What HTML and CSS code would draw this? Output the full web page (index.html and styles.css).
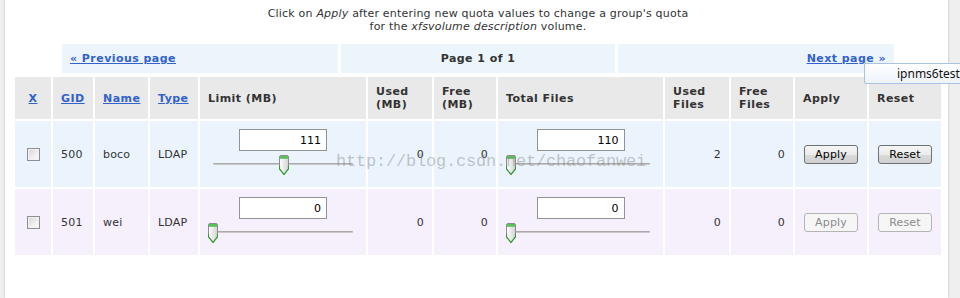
FILE: index.html
```html
<!DOCTYPE html>
<html lang="en">
<head>
  <meta charset="UTF-8" />
  <title>Group Quotas</title>
  <link rel="stylesheet" href="styles.css">
</head>
<body>

<div class="panel">
  <div class="content">
    <p class="intro">Click on <em>Apply</em> after entering new quota values to change a group's quota<br>for the <em>xfsvolume description</em> volume.</p>

    <table class="pager">
      <tr>
        <td class="pager-prev"><a href="#">&laquo; Previous page</a></td>
        <td class="pager-page">Page 1 of 1</td>
        <td class="pager-next"><a href="#">Next page &raquo;</a></td>
      </tr>
    </table>

    <table class="quotas">
      <thead>
        <tr>
          <th class="c-x"><a href="#">X</a></th>
          <th class="c-gid"><a href="#">GID</a></th>
          <th class="c-name"><a href="#">Name</a></th>
          <th class="c-type"><a href="#">Type</a></th>
          <th class="c-limit">Limit (MB)</th>
          <th class="c-used">Used<br>(MB)</th>
          <th class="c-free">Free<br>(MB)</th>
          <th class="c-files">Total Files</th>
          <th class="c-usedf">Used<br>Files</th>
          <th class="c-freef">Free<br>Files</th>
          <th class="c-apply">Apply</th>
          <th class="c-reset">Reset</th>
        </tr>
      </thead>
      <tbody>
        <tr class="row-a">
          <td class="check"><input type="checkbox"></td>
          <td>500</td>
          <td>boco</td>
          <td>LDAP</td>
          <td class="slide-cell">
            <input class="quota-input" type="text" value="111">
            <div class="slider">
              <div class="slider-track"></div>
              <div class="slider-thumb" style="left:71px">
                <svg width="10" height="20" viewBox="0 0 10 20"><defs><linearGradient id="tg" x1="0" x2="1"><stop offset="0" stop-color="#ffffff"/><stop offset="1" stop-color="#d2d2d2"/></linearGradient></defs><path d="M0.5 2 Q0.5 0.5 2 0.5 H8 Q9.5 0.5 9.5 2 V14 L5 19.5 L0.5 14 Z" fill="url(#tg)" stroke="#8c8c8c"/><path d="M1 1 H9 V3.8 H1 Z" fill="#58c058"/><path d="M0.5 11 V14 L5 19.5 L9.5 14 V11" fill="none" stroke="#3a9a3a" stroke-width="1.2"/></svg>
              </div>
            </div>
          </td>
          <td class="num">0</td>
          <td class="num">0</td>
          <td class="slide-cell">
            <input class="quota-input" type="text" value="110">
            <div class="slider">
              <div class="slider-track"></div>
              <div class="slider-thumb" style="left:0px">
                <svg width="10" height="20" viewBox="0 0 10 20"><path d="M0.5 2 Q0.5 0.5 2 0.5 H8 Q9.5 0.5 9.5 2 V14 L5 19.5 L0.5 14 Z" fill="url(#tg)" stroke="#8c8c8c"/><path d="M1 1 H9 V3.8 H1 Z" fill="#58c058"/><path d="M0.5 11 V14 L5 19.5 L9.5 14 V11" fill="none" stroke="#3a9a3a" stroke-width="1.2"/></svg>
              </div>
            </div>
          </td>
          <td class="num">2</td>
          <td class="num">0</td>
          <td class="btn-cell"><button class="btn">Apply</button></td>
          <td class="btn-cell"><button class="btn">Reset</button></td>
        </tr>
        <tr class="row-b">
          <td class="check"><input type="checkbox"></td>
          <td>501</td>
          <td>wei</td>
          <td>LDAP</td>
          <td class="slide-cell">
            <input class="quota-input" type="text" value="0">
            <div class="slider">
              <div class="slider-track"></div>
              <div class="slider-thumb" style="left:0px">
                <svg width="10" height="20" viewBox="0 0 10 20"><path d="M0.5 2 Q0.5 0.5 2 0.5 H8 Q9.5 0.5 9.5 2 V14 L5 19.5 L0.5 14 Z" fill="url(#tg)" stroke="#8c8c8c"/><path d="M1 1 H9 V3.8 H1 Z" fill="#58c058"/><path d="M0.5 11 V14 L5 19.5 L9.5 14 V11" fill="none" stroke="#3a9a3a" stroke-width="1.2"/></svg>
              </div>
            </div>
          </td>
          <td class="num">0</td>
          <td class="num">0</td>
          <td class="slide-cell">
            <input class="quota-input" type="text" value="0">
            <div class="slider">
              <div class="slider-track"></div>
              <div class="slider-thumb" style="left:0px">
                <svg width="10" height="20" viewBox="0 0 10 20"><path d="M0.5 2 Q0.5 0.5 2 0.5 H8 Q9.5 0.5 9.5 2 V14 L5 19.5 L0.5 14 Z" fill="url(#tg)" stroke="#8c8c8c"/><path d="M1 1 H9 V3.8 H1 Z" fill="#58c058"/><path d="M0.5 11 V14 L5 19.5 L9.5 14 V11" fill="none" stroke="#3a9a3a" stroke-width="1.2"/></svg>
              </div>
            </div>
          </td>
          <td class="num">0</td>
          <td class="num">0</td>
          <td class="btn-cell"><button class="btn" disabled>Apply</button></td>
          <td class="btn-cell"><button class="btn" disabled>Reset</button></td>
        </tr>
      </tbody>
    </table>

    <div class="watermark">http://blog.csdn.net/chaofanwei</div>
  </div>
</div>

<div class="suggest"><span>ipnms6test</span></div>

</body>
</html>
```

FILE: styles.css
```css
html, body {
  overflow: hidden;
}

body {
  margin: 0;
  background-color: #efefef;
  font-family: "DejaVu Sans", Verdana, sans-serif;
  font-size: 11px;
  letter-spacing: 0.2px;
  color: #333;
}

.panel {
  margin-left: 5px;
  width: 943px;
  min-height: 298px;
  background: #ffffff;
  box-shadow: 0 0 3px rgba(0,0,0,0.2);
}

.content {
  position: relative;
  width: 930px;
  margin-left: 8px;
  padding-top: 7px;
}

.intro {
  margin: 0;
  text-align: center;
  line-height: 13px;
}

a {
  color: #3262cc;
  font-weight: bold;
}

/* pager */

.pager {
  width: 838px;
  margin: 11px auto 0;
  border-spacing: 3px 0;
  table-layout: fixed;
}

.pager td {
  height: 29px;
  padding: 0 8px;
  background-color: #ecf4fc;
  font-weight: bold;
  letter-spacing: 0.45px;
  box-sizing: border-box;
}

.pager-prev, .pager-next { width: 276px; }

.pager-page {
  width: 274px;
  text-align: center;
}

.pager-next { text-align: right; }

/* quota table */

.quotas {
  width: 930px;
  margin-top: 2px;
  border-spacing: 2px;
  table-layout: fixed;
}

.quotas th {
  height: 42px;
  padding: 0 8px;
  background-color: #e9e9e9;
  text-align: left;
  line-height: 13px;
  letter-spacing: 0.45px;
  box-sizing: border-box;
}

.c-x { width: 36px; text-align: center !important; }
.c-gid { width: 40px; }
.c-name { width: 53px; }
.c-type { width: 48px; }
.c-limit { width: 166px; }
.c-used { width: 64px; }
.c-free { width: 62px; }
.c-files { width: 165px; }
.c-usedf { width: 64px; }
.c-freef { width: 62px; }
.c-apply { width: 72px; }
.c-reset { width: 72px; }

.quotas tbody tr {
  height: 66px;
}

.quotas td {
  padding: 0 8px;
  vertical-align: middle;
}

.row-a td { background-color: #ebf4fc; }
.row-b td { background-color: #f6effc; }

.num { text-align: right; }

.check { text-align: center; }

.check input {
  appearance: none;
  width: 13px;
  height: 13px;
  margin: 0;
  vertical-align: middle;
  border: 1px solid #8e8e8e;
  background: linear-gradient(135deg, #d6d6d6 0%, #f0f0f0 60%, #ffffff 100%);
  box-shadow: inset 0 0 0 1px #f2f2f2;
}

.slide-cell {
  vertical-align: top !important;
  padding-top: 8px !important;
}

.quota-input {
  display: block;
  box-sizing: border-box;
  width: 88px;
  height: 22px;
  margin: 0 auto;
  padding: 0 5px 0 2px;
  border: 1px solid #929292;
  background: #fff;
  text-align: right;
  font-family: "DejaVu Sans", Verdana, sans-serif;
  font-size: 11px;
  color: #000;
}

.slider {
  position: relative;
  height: 20px;
  margin-top: 4px;
}

.slider-track {
  position: absolute;
  left: 5px;
  right: 5px;
  top: 8px;
  height: 2px;
  border-radius: 1px;
  background: linear-gradient(to bottom, #9c9c9c, #d6d6d6);
}

.slider-thumb {
  position: absolute;
  top: 0;
  width: 10px;
  height: 20px;
}

.slider-thumb svg { display: block; }

.btn-cell { text-align: center; }

.btn {
  width: 54px;
  height: 19px;
  padding: 0;
  border: 1px solid #707070;
  border-radius: 3px;
  background: linear-gradient(to bottom, #f6f6f6 0%, #ebebeb 50%, #dcdcdc 51%, #cfcfcf 100%);
  font-family: "DejaVu Sans", Verdana, sans-serif;
  font-size: 11px;
  letter-spacing: 0.2px;
  color: #000;
}

.btn:disabled {
  border-color: #b4b4b4;
  background: #f6f6f6;
  color: #8a8a8a;
}

/* overlays */

.watermark {
  position: absolute;
  left: 323px;
  top: 153px;
  font-family: "Liberation Mono", monospace;
  font-size: 17px;
  line-height: 17px;
  letter-spacing: -0.2px;
  color: rgba(130,130,130,0.45);
  white-space: nowrap;
  pointer-events: none;
}

.suggest {
  position: absolute;
  left: 864px;
  top: 63px;
  width: 120px;
  height: 21px;
  box-sizing: border-box;
  padding-left: 32px;
  border: 1px solid #a9c1e2;
  border-radius: 2px;
  background: linear-gradient(to bottom, #ffffff, #eef3fa);
  font-family: "Noto Sans", sans-serif;
  font-size: 12px;
  line-height: 19px;
  letter-spacing: 0;
  color: #111;
}
```
